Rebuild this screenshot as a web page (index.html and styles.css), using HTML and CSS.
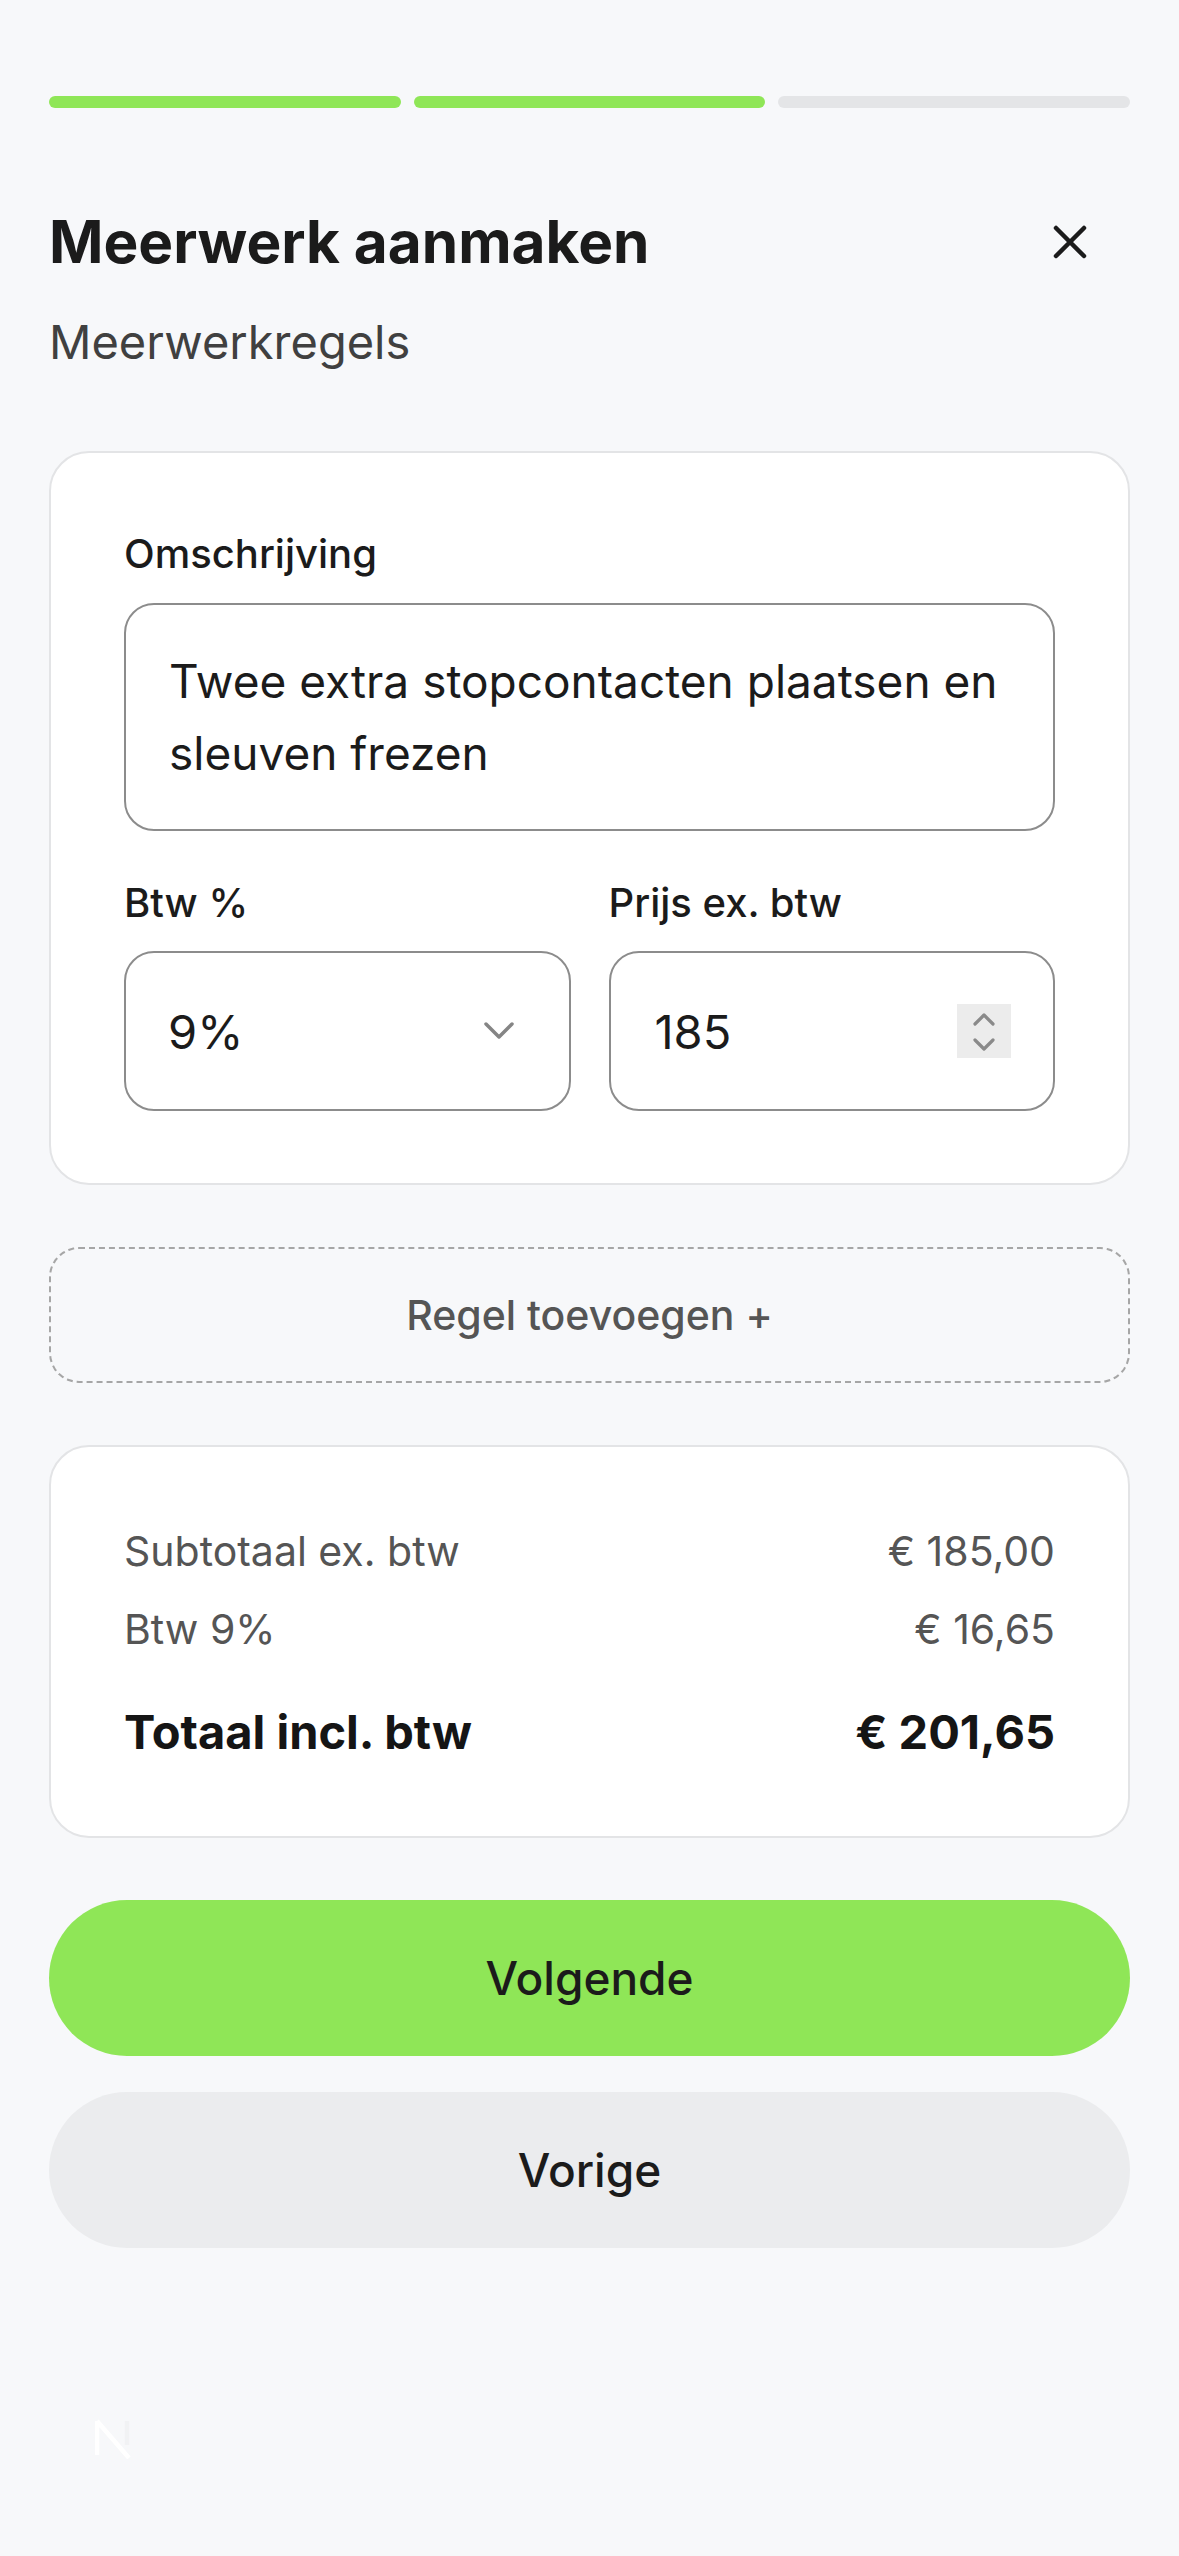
FILE: index.html
```html
<!DOCTYPE html>
<html lang="nl">
<head>
  <meta charset="UTF-8" />
  <meta name="viewport" content="width=device-width, initial-scale=1.0"/>
  <title>Meerwerk aanmaken</title>
  <link rel="stylesheet" href="styles.css">
</head>
<body>
  <main class="page">
    <!-- Steps -->
    <div class="steps">
      <span class="step done"></span>
      <span class="step done"></span>
      <span class="step"></span>
    </div>

    <header class="head">
      <h1>Meerwerk aanmaken</h1>
      <button class="close-btn" aria-label="Sluiten">
        <svg width="36" height="36" viewBox="0 0 36 36">
          <path d="M4 4 L32 32 M32 4 L4 32" stroke="#1b1b1b" stroke-width="4.5" stroke-linecap="round" fill="none"/>
        </svg>
      </button>
    </header>
    <h2 class="subtitle">Meerwerkregels</h2>

    <!-- Regel -->
    <section class="card line-card">
      <label class="field-label">Omschrijving</label>
      <div class="textarea">Twee extra stopcontacten plaatsen en<br>sleuven frezen</div>

      <div class="field-row">
        <div class="field">
          <label class="field-label">Btw %</label>
          <div class="select-box">
            <span>9%</span>
            <svg width="30" height="18" viewBox="0 0 30 18">
              <path d="M2 2 L15 15 L28 2" stroke="#858585" stroke-width="3.5" stroke-linecap="round" stroke-linejoin="round" fill="none"/>
            </svg>
          </div>
        </div>
        <div class="field">
          <label class="field-label">Prijs ex. btw</label>
          <div class="number-box">
            <span>185</span>
            <span class="spinner">
              <svg width="24" height="40" viewBox="0 0 24 40">
                <path d="M3 13 L12 4 L21 13 M3 29 L12 38 L21 29" stroke="#8a8a8a" stroke-width="3.2" stroke-linecap="round" stroke-linejoin="round" fill="none"/>
              </svg>
            </span>
          </div>
        </div>
      </div>
    </section>

    <button class="add-line">Regel toevoegen +</button>

    <!-- Totalen -->
    <section class="card summary">
      <div class="sum-row">
        <span>Subtotaal ex. btw</span>
        <span>€ 185,00</span>
      </div>
      <div class="sum-row second">
        <span>Btw 9%</span>
        <span>€ 16,65</span>
      </div>
      <div class="sum-row total">
        <span>Totaal incl. btw</span>
        <span>€ 201,65</span>
      </div>
    </section>

    <button class="btn btn-primary">Volgende</button>
    <button class="btn btn-secondary">Vorige</button>
  </main>

  <div class="dev-badge">
    <svg width="36" height="40" viewBox="0 0 36 40">
      <path d="M2 2 V36 M2 2 L34 39" stroke="#ffffff" stroke-width="4.5" fill="none"/>
      <path d="M32 2 V26" stroke="#f1f2f4" stroke-width="4.5" fill="none"/>
    </svg>
  </div>
</body>
</html>
```

FILE: styles.css
```css
body {
  font-family: Inter, "Noto Sans", Arial, sans-serif;
  background-color: #f7f8fa;
  color: #1b1b1b;
  margin: 0;
  min-height: 2556px;
}
.page {
  padding: 96px 49px 0;
}
button {
  font-family: inherit;
  cursor: pointer;
}

/* steps */
.steps {
  display: flex;
  gap: 13px;
}
.step {
  flex: 1;
  height: 12px;
  border-radius: 6px;
  background-color: #e4e5e7;
}
.step.done {
  background-color: #8fe657;
}

/* header */
.head {
  display: flex;
  justify-content: space-between;
  align-items: center;
  margin-top: 99px;
}
.head h1 {
  font-size: 58.5px;
  font-weight: 700;
  line-height: 70px;
  margin: 0;
}
.close-btn {
  border: none;
  background: none;
  padding: 0;
  width: 36px;
  height: 36px;
  margin-right: 42px;
  display: flex;
}
.subtitle {
  font-size: 47px;
  font-weight: 400;
  line-height: 58px;
  color: #404040;
  margin: 36px 0 0;
}

/* cards */
.card {
  background: #fff;
  border: 2px solid #e3e4e6;
  border-radius: 40px;
  padding: 72px 73px;
}
.line-card {
  margin-top: 80px;
}
.field-label {
  display: block;
  font-size: 40px;
  font-weight: 500;
  line-height: 58px;
  margin-bottom: 20px;
}
.textarea {
  border: 2px solid #8c8c8c;
  border-radius: 30px;
  padding: 40px 43px;
  font-size: 46px;
  line-height: 72px;
  white-space: nowrap;
}
.field-row {
  display: grid;
  grid-template-columns: 1fr 1fr;
  gap: 38px;
  margin-top: 43px;
}
.field .field-label {
  margin-bottom: 19px;
}
.select-box,
.number-box {
  height: 156px;
  border: 2px solid #8c8c8c;
  border-radius: 30px;
  display: flex;
  align-items: center;
  justify-content: space-between;
  font-size: 47px;
}
.select-box {
  padding: 0 55px 0 42px;
}
.number-box {
  padding: 0 42px 0 44px;
}
.spinner {
  width: 54px;
  height: 54px;
  background-color: #ececec;
  display: flex;
  align-items: center;
  justify-content: center;
}

/* add line */
.add-line {
  display: block;
  width: 100%;
  height: 136px;
  margin-top: 62px;
  border: 2px dashed #a6a6a6;
  border-radius: 30px;
  background: transparent;
  font-size: 41px;
  font-weight: 500;
  color: #555;
}

/* summary */
.summary {
  margin-top: 62px;
}
.sum-row {
  display: flex;
  justify-content: space-between;
  font-size: 41px;
  line-height: 65px;
  color: #555;
}
.sum-row.second {
  margin-top: 13px;
}
.sum-row.total {
  margin-top: 37px;
  font-size: 47px;
  font-weight: 700;
  color: #151515;
}

/* buttons */
.btn {
  display: block;
  width: 100%;
  height: 156px;
  border: none;
  border-radius: 78px;
  font-size: 46px;
  font-weight: 500;
  color: #1b1b1b;
}
.btn-primary {
  margin-top: 62px;
  background-color: #8fe657;
}
.btn-secondary {
  margin-top: 36px;
  background-color: #ebecee;
}

.dev-badge {
  position: absolute;
  left: 95px;
  top: 2419px;
}
```
